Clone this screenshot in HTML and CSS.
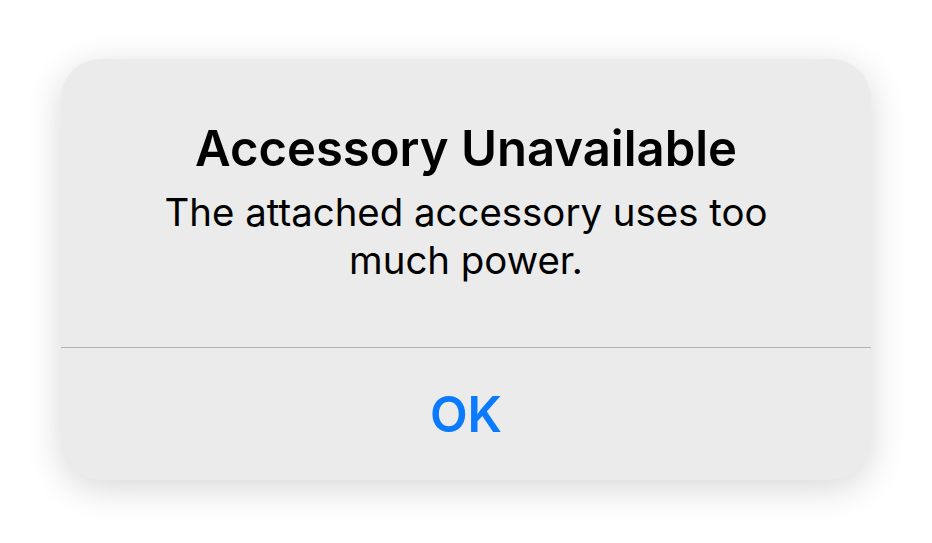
FILE: index.html
```html
<!DOCTYPE html>
<html>
<head>
<meta charset="utf-8">
<link rel="stylesheet" href="styles.css">
</head>
<body>
<div class="page">
  <div class="alert">
    <div class="content">
      <div class="title">Accessory Unavailable</div>
      <div class="message">The attached accessory uses too<br>much power.</div>
    </div>
    <div class="actions">
      <div class="button">OK</div>
    </div>
  </div>
</div>
</body>
</html>
```
FILE: styles.css
```css
html, body {
  margin: 0;
  padding: 0;
  background: #ffffff;
  font-family: Inter, "Open Sans", "Liberation Sans", sans-serif;
}
.page {
  padding: 59px 0 0 61px;
  height: 543px;
  box-sizing: border-box;
}
.alert {
  width: 810px;
  height: 421px;
  background: #ebebeb;
  border-radius: 40px;
  box-shadow: 0 8px 36px rgba(0,0,0,0.16);
  display: flex;
  flex-direction: column;
  overflow: hidden;
}
.content {
  padding: 60px 30px 0;
  height: 289px;
  flex: none;
  box-sizing: border-box;
  border-bottom: 1px solid #b3b3b3;
  text-align: center;
  color: #000;
}
.title {
  font-size: 49px;
  font-weight: 600;
  line-height: 60px;
}
.message {
  margin-top: 9px;
  font-size: 38.4px;
  font-weight: 400;
  line-height: 48px;
}
.actions {
  flex: 1;
  display: flex;
  align-items: center;
  justify-content: center;
}
.button {
  color: #0a7aff;
  font-size: 49px;
  font-weight: 600;
}
```
